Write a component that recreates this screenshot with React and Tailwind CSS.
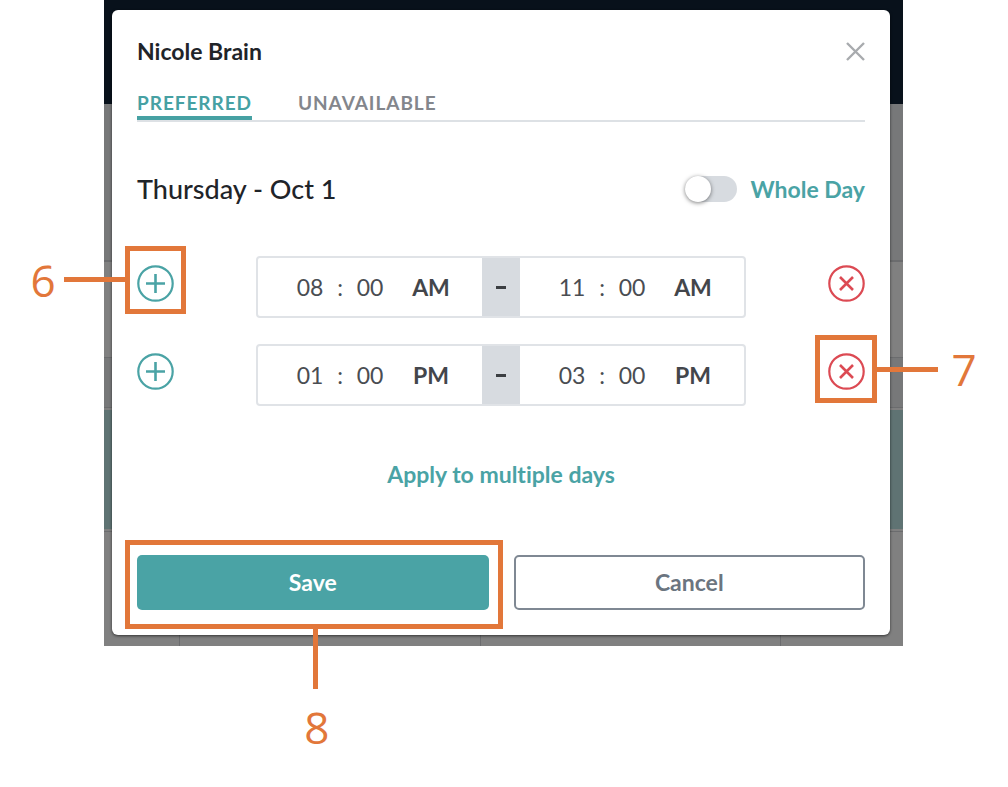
import { useState } from "react";

function CircleIcon({ children }) {
  return (
    <svg className="block size-[37px]" viewBox="0 0 37 37" fill="none" stroke="currentColor" strokeWidth="2.2" aria-hidden="true">
      <circle cx="18.5" cy="18.5" r="17.2" />
      {children}
    </svg>
  );
}

function Callout({ number, frame, line, label }) {
  return (
    <div className={`pointer-events-none absolute border-[5px] border-[#e2773a] ${frame}`}>
      <div className={`absolute bg-[#e2773a] ${line}`} />
      <span className={`absolute w-8 text-center font-['Open_Sans',sans-serif] text-[44px] leading-[44px] font-medium text-[#e2773a] ${label}`}>
        {number}
      </span>
    </div>
  );
}

function TimeField({ label, hour, period }) {
  return (
    <div className="flex min-w-0 flex-1 items-center justify-center pl-1.5 text-[23px] text-[#4a4d52]">
      <input aria-label={`${label} hour`} defaultValue={hour} className="w-10 bg-transparent text-center outline-none" />
      <span className="w-5 text-center">:</span>
      <input aria-label={`${label} minutes`} defaultValue="00" className="w-10 bg-transparent text-center outline-none" />
      <button type="button" className="ml-4 w-[50px] text-center font-bold text-[#43464b]">{period}</button>
    </div>
  );
}

function TimeRow({ from, to, period, addCallout, removeCallout }) {
  return (
    <div className="flex items-start">
      <div className="relative mt-[9px]">
        <button type="button" aria-label="Add time range" className="block text-[#4aa3a5]">
          <CircleIcon>
            <path d="M18.5 9v19M9 18.5h19" strokeWidth="2.6" />
          </CircleIcon>
        </button>
        {addCallout}
      </div>
      <div className="mx-[82px] flex h-[62px] min-w-0 flex-1 rounded-sm border-2 border-[#e0e3e7]">
        <TimeField label="Start" hour={from} period={period} />
        <div className="flex w-[38px] items-center justify-center bg-[#d7dbe0]">
          <span className="h-[3px] w-[10px] bg-[#3b3e42]" />
        </div>
        <TimeField label="End" hour={to} period={period} />
      </div>
      <div className="relative mt-[9px]">
        <button type="button" aria-label="Remove time range" className="block text-[#dc4a53]">
          <CircleIcon>
            <path d="M12 12l13 13M25 12L12 25" strokeWidth="2.6" />
          </CircleIcon>
        </button>
        {removeCallout}
      </div>
    </div>
  );
}

function Backdrop() {
  return (
    <div className="col-start-1 row-start-1 flex flex-col bg-[#808080]" aria-hidden="true">
      <div className="h-[104px] bg-[#08111b]" />
      <div className="h-[158px] border-b-2 border-[#6b6c6e] bg-[#777879]" />
      <div className="h-24 border-b border-[#6b6c6e]" />
      <div className="h-[50px] border-b border-[#6b6c6e] bg-[#777879]" />
      <div className="my-0.5 h-[119px] bg-[#5f7373]" />
      <div className="flex flex-1 border-t border-[#6b6c6e]">
        <div className="w-[76px] border-r border-[#6b6c6e]" />
        <div className="flex-1 border-r border-[#6b6c6e]" />
        <div className="flex-1 border-r border-[#6b6c6e]" />
        <div className="w-[122px]" />
      </div>
    </div>
  );
}

export default function App() {
  const [tab, setTab] = useState("Preferred");
  return (
    <main className="min-h-screen bg-white pr-[105px] pb-[141px] pl-[104px] font-[Lato,sans-serif] [font-variant-ligatures:none]">
      <div className="grid">
        <Backdrop />
        <section
          role="dialog"
          aria-label="Nicole Brain"
          className="z-10 col-start-1 row-start-1 mt-[10px] mr-[13px] mb-[11px] ml-2 rounded-md bg-white px-[25px] pt-[26px] pb-[25px] shadow-[0_1px_3px_rgba(0,0,0,0.6)]"
        >
          <header className="flex h-[30px] items-center justify-between">
            <h1 className="text-[23px] font-bold text-[#1f2429]">Nicole Brain</h1>
            <button type="button" aria-label="Close" className="text-[#a8abae]">
              <svg className="block size-5" viewBox="0 0 20 20" fill="none" stroke="currentColor" strokeWidth="2.4" aria-hidden="true">
                <path d="M2 2l17 17M19 2l-17 17" />
              </svg>
            </button>
          </header>

          <nav className="mt-6 flex gap-[46px] border-b-2 border-[#dde1e5]">
            {["Preferred", "Unavailable"].map((name) => (
              <button
                key={name}
                type="button"
                onClick={() => setTab(name)}
                className={`h-[30px] border-b-4 text-[19px] leading-[26px] font-bold tracking-wider uppercase ${
                  tab === name ? "border-[#46a1a3] text-[#46a1a3]" : "border-transparent text-[#83868c]"
                }`}
              >
                {name}
              </button>
            ))}
          </nav>

          <div className="mt-[47px] flex h-10 items-center justify-between">
            <h2 className="text-[27px] font-medium text-[#1f2429]">Thursday - Oct 1</h2>
            <label className="flex items-center gap-[14px] text-[23px] font-bold text-[#4aa3a5]">
              <input
                type="checkbox"
                role="switch"
                className="h-[26px] w-[52px] appearance-none rounded-full bg-[#d7dbe0] before:block before:size-[26px] before:rounded-full before:bg-white before:shadow-[0_1px_4px_rgba(0,0,0,0.5)] checked:bg-[#4aa3a5] checked:before:ml-[26px]"
              />
              Whole Day
            </label>
          </div>

          <div className="mt-[47px] flex flex-col gap-[26px]">
            <TimeRow
              from="08"
              to="11"
              period="AM"
              addCallout={
                <Callout
                  number="6"
                  frame="-top-[19px] -right-3 -bottom-3 -left-3"
                  line="top-[26px] right-full mr-[5px] h-[5px] w-[61px]"
                  label="top-[7px] right-full mr-[71px]"
                />
              }
            />
            <TimeRow
              from="01"
              to="03"
              period="PM"
              removeCallout={
                <Callout
                  number="7"
                  frame="-top-[18px] -right-3 -bottom-[13px] -left-[13px]"
                  line="top-[27px] left-full ml-[5px] h-[5px] w-[61px]"
                  label="top-[7px] left-full ml-[76px]"
                />
              }
            />
          </div>

          <div className="mt-[53px] flex h-[30px] items-center justify-center">
            <button type="button" className="text-[23px] font-bold text-[#4aa3a5]">Apply to multiple days</button>
          </div>

          <footer className="mt-[66px] grid grid-cols-2 gap-[25px]">
            <div className="relative">
              <button type="button" className="h-[55px] w-full rounded-[5px] bg-[#4aa3a5] text-[23px] font-bold text-white">Save</button>
              <Callout
                number="8"
                frame="-top-[15px] -right-[14px] -bottom-[19px] -left-3"
                line="top-full left-1/2 mt-[5px] -ml-px h-[60px] w-[5px]"
                label="top-full left-1/2 -ml-[13px] mt-[81px]"
              />
            </div>
            <button type="button" className="h-[55px] rounded-[5px] border-2 border-[#7f8893] text-[23px] font-bold text-[#6b7580]">Cancel</button>
          </footer>
        </section>
      </div>
    </main>
  );
}
